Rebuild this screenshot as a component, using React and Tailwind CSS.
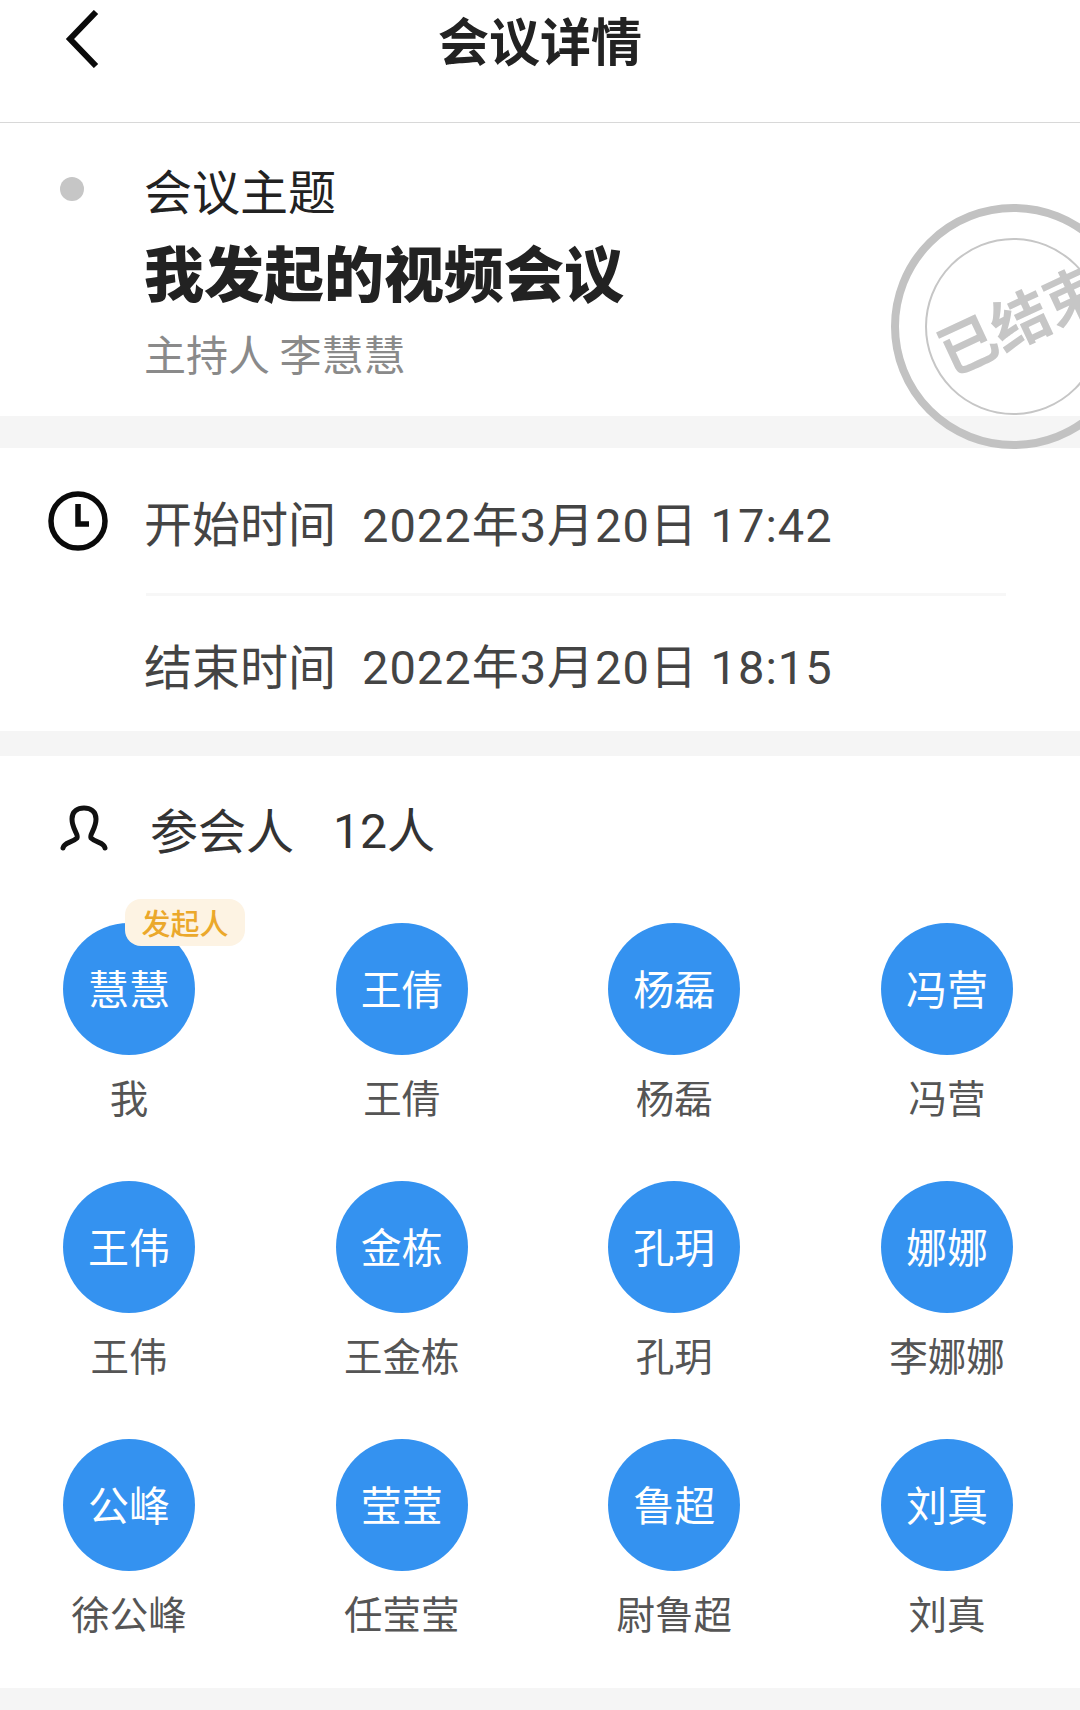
const sans = { fontFamily: '"Noto Sans CJK SC", sans-serif' };
const dateFont = { fontFamily: 'Roboto, "Noto Sans CJK SC", sans-serif' };

const people = [
  { short: "慧慧", name: "我", owner: true },
  { short: "王倩", name: "王倩" },
  { short: "杨磊", name: "杨磊" },
  { short: "冯营", name: "冯营" },
  { short: "王伟", name: "王伟" },
  { short: "金栋", name: "王金栋" },
  { short: "孔玥", name: "孔玥" },
  { short: "娜娜", name: "李娜娜" },
  { short: "公峰", name: "徐公峰" },
  { short: "莹莹", name: "任莹莹" },
  { short: "鲁超", name: "尉鲁超" },
  { short: "刘真", name: "刘真" },
];

function BackIcon() {
  return (
    <svg width="34" height="58" viewBox="0 0 34 58" fill="none" stroke="#0a0a0a" strokeWidth="6">
      <path d="M31 2 L5 29 L31 56" />
    </svg>
  );
}

function ClockIcon() {
  return (
    <svg width="60" height="60" viewBox="0 0 60 60" fill="none" stroke="#0a0a0a" strokeWidth="5.5">
      <circle cx="30" cy="30" r="27" />
      <path d="M30 13 V33 H41" />
    </svg>
  );
}

function PersonIcon() {
  return (
    <svg width="48" height="46" viewBox="0 0 48 46" fill="none" stroke="#111" strokeWidth="5" strokeLinecap="round">
      <path d="M3 43 C4 37 12 38 17 33 C19 30 12 24 12 14 C12 6 18 3 24 3 C30 3 36 6 36 14 C36 24 29 30 31 33 C36 38 44 37 45 43" />
    </svg>
  );
}

function Stamp() {
  return (
    <div className="absolute left-[891px] top-[81px] w-[245px] h-[245px] rounded-full border-[8px] border-[#c2c2c2] flex items-center justify-center">
      <div className="w-[177px] h-[177px] rounded-full border-2 border-[#c6c6c6]" />
      <div className="absolute left-[33px] top-[70px] rotate-[-25deg] whitespace-nowrap text-[58px] leading-[70px] font-semibold text-[#c6c6c6]">
        已结束
      </div>
    </div>
  );
}

export default function App() {
  return (
    <div className="w-[1080px] h-[1710px] overflow-hidden bg-white" style={sans}>
      <header className="h-[123px] border-b border-[#d8d8d8] relative flex items-start justify-center">
        <div className="absolute left-[65px] top-[10px]">
          <BackIcon />
        </div>
        <h1 className="mt-[9px] text-[51px] leading-[60px] font-bold text-[#222]">会议详情</h1>
      </header>

      <section className="relative z-10 h-[293px] pl-[144px] pt-[36px]">
        <div className="absolute left-[60px] top-[54px] w-[24px] h-[24px] rounded-full bg-[#c6c6c6]" />
        <div className="text-[48px] leading-[60px] text-[#222]">会议主题</div>
        <div className="mt-[12px] text-[60px] leading-[80px] font-black text-[#222]">我发起的视频会议</div>
        <div className="mt-[12px] text-[42px] leading-[60px] text-[#8a8a8a]">主持人 李慧慧</div>
        <Stamp />
      </section>

      <div className="h-[32px] bg-[#f5f5f5]" />

      <section className="h-[283px]">
        <div className="flex items-center pl-[48px] pt-[43px] pb-[37px]">
          <div className="w-[96px] -mt-[5px]">
            <ClockIcon />
          </div>
          <div className="flex text-[48px] leading-[60px] text-[#444]">
            <span className="w-[218px]">开始时间</span>
            <span className="mt-[5px] text-[47px] tracking-[1px]" style={dateFont}>2022年3月20日 17:42</span>
          </div>
        </div>
        <div className="ml-[146px] w-[860px] h-[3px] bg-[#f7f7f7]" />
        <div className="flex pl-[144px] pt-[38px] text-[48px] leading-[60px] text-[#444]">
          <span className="w-[218px]">结束时间</span>
          <span className="mt-[4px] text-[47px] tracking-[1px]" style={dateFont}>2022年3月20日 18:15</span>
        </div>
      </section>

      <div className="h-[25px] bg-[#f5f5f5]" />

      <section className="h-[932px] pt-[42px]">
        <div className="flex items-center h-[60px] pl-[60px] text-[48px] leading-[60px] text-[#333]">
          <PersonIcon />
          <span className="ml-[42px] w-[183px]">参会人</span>
          <span className="mt-[7px]" style={dateFont}>12人</span>
        </div>
        <div className="mt-[65px] pl-[63px] pr-[67px] grid grid-cols-[repeat(4,132px)] justify-between gap-y-[60px]">
          {people.map((p) => (
            <div key={p.short} className="flex flex-col items-center">
              <div className="relative w-[132px] h-[132px] rounded-full bg-[#3492f0] flex items-center justify-center pb-[3px] text-[41px] text-white">
                {p.short}
                {p.owner && (
                  <span className="absolute left-[62px] top-[-24px] w-[120px] h-[47px] rounded-[16px] bg-[#fdf3e3] flex items-center justify-center text-[29px] font-medium text-[#eba82b]">
                    发起人
                  </span>
                )}
              </div>
              <div className="mt-[16px] text-[38.5px] leading-[50px] whitespace-nowrap text-[#555]">{p.name}</div>
            </div>
          ))}
        </div>
      </section>

      <div className="h-[22px] bg-[#f5f5f5]" />
    </div>
  );
}
